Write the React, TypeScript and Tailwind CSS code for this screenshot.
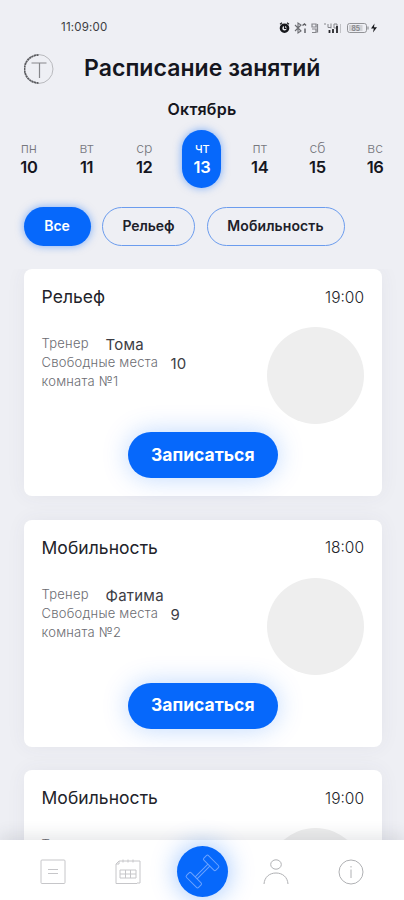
import clsx from "clsx"

interface Lesson {
  id: number
  title: string
  time: string
  trainer?: string
  places?: number
  room?: string
}

const days = [
  { name: "пн", date: 10 },
  { name: "вт", date: 11 },
  { name: "ср", date: 12 },
  { name: "чт", date: 13 },
  { name: "пт", date: 14 },
  { name: "сб", date: 15 },
  { name: "вс", date: 16 },
]

const lessons: Lesson[] = [
  { id: 1, title: "Рельеф", time: "19:00", trainer: "Тома", places: 10, room: "комната №1" },
  { id: 2, title: "Мобильность", time: "18:00", trainer: "Фатима", places: 9, room: "комната №2" },
  { id: 3, title: "Мобильность", time: "19:00" },
]

function StatusBar() {
  return (
    <div className="flex h-[56px] items-center justify-between pr-[26px] pl-[61px] text-[#3c3d42]">
      <span className="text-[11.5px] tracking-[0.2px]">11:09:00</span>
      <svg width="100" height="14" viewBox="0 0 100 14" fill="none">
        {/* alarm */}
        <circle cx="6.5" cy="7.2" r="3.5" stroke="#17181c" strokeWidth="2.6" />
        <path d="M2 3.2l2-1.4M11 3.2L9 1.8M6.5 5v2.4h2" stroke="#17181c" strokeWidth="1.1" />
        {/* bluetooth */}
        <path d="M17 4l6 6-3 2V2l3 2-6 6" stroke="#6b6c71" strokeWidth="1.1" />
        <path d="M24.5 4.5l2-1.5 1.5 1.5M27 7.500v4.500" stroke="#5b5c61" strokeWidth="1.400" />
        {/* nfc */}
        <path d="M34 3h4v3h-4zM34 8h4v3.500h-4M39.500 3v8.500" stroke="#85868b" strokeWidth="1.200" />
        {/* signal */}
        <path d="M46 3h2M50 3v3.500h3M53 2.500v5M56 3h3v4h-3z" stroke="#85868b" strokeWidth="1" />
        <path d="M51.500 9v3M55 8v4M59 5v7" stroke="#26272c" strokeWidth="1.800" />
        <path d="M62.500 3v9" stroke="#c0c1c5" strokeWidth="1" />
        {/* battery */}
        <rect x="69.500" y="2.500" width="19" height="9" rx="2.200" stroke="#929397" />
        <rect x="71" y="4" width="13.500" height="6" fill="#d0d1d5" />
        <text x="73.500" y="9.700" fontSize="7" fill="#6b6c71">85</text>
        <path d="M90 5.500v3" stroke="#929397" strokeWidth="1.200" />
        <path d="M96.500 2.500L93 7.500h2.800l-.8 4 4-5.300h-3z" fill="#17181c" />
      </svg>
    </div>
  )
}

function Logo() {
  return (
    <svg width="30" height="32" viewBox="0 0 30 32" fill="none">
      <path d="M14.5 1.5a14.3 14.3 0 0 1 0 29" stroke="#b9babe" strokeWidth="1" />
      <path d="M14.5 2A14 14 0 0 0 14.5 30" stroke="#5b5c60" strokeWidth="1.8" strokeDasharray="2.2 0.4" />
      <path d="M7.5 10h15M15.5 10v15" stroke="#85868a" strokeWidth="1.2" />
    </svg>
  )
}

function DayPicker() {
  return (
    <div className="grid h-[58px] grid-cols-7">
      {days.map(({ name, date }) => {
        const active = date === 13
        return (
          <div key={date} className="flex justify-center">
            <div
              className={clsx(
                "flex h-[58px] w-[39px] flex-col items-center rounded-full pt-[8px]",
                active ? "bg-[#0668fb] text-white shadow-[0_0_9px_rgba(6,104,251,0.5)]" : "text-[#15161e]",
              )}
            >
              <span className={clsx("text-[14px] leading-[19px]", active ? "text-white" : "font-light text-[#77787e]")}>{name}</span>
              <span className="text-[16.5px] leading-[21px] font-semibold tracking-[-0.3px]">{date}</span>
            </div>
          </div>
        )
      })}
    </div>
  )
}

function Filters() {
  return (
    <div className="flex h-[39px] gap-[11.5px] pl-[23.5px] text-[14px] font-semibold text-[#20212a]">
      <button className="w-[67px] rounded-full bg-[#0668fb] pb-[2px] text-white shadow-[0_0_9px_rgba(6,104,251,0.5)]">Все</button>
      <button className="w-[93px] rounded-full border border-[#6b9cee] pb-[2px] tracking-[-0.1px]">Рельеф</button>
      <button className="w-[138px] rounded-full border border-[#6b9cee] pb-[2px] tracking-[0.1px]">Мобильность</button>
    </div>
  )
}

function LessonCard({ lesson }: { lesson: Lesson }) {
  return (
    <article className="h-[227px] shrink-0 rounded-[8px] bg-white px-[18px] pt-[16px] shadow-[0_0_20px_rgba(60,70,100,0.06)]">
      <div className="flex h-[25px] items-center justify-between text-[#22232a]">
        <h2 className="text-[17.5px] tracking-[0.05px]">{lesson.title}</h2>
        <span className="text-[15.5px] font-light">{lesson.time}</span>
      </div>
      <div className="flex justify-between pt-[17px]">
        <div className="pt-[7px] text-[13px] leading-[19px] font-light tracking-[0.23px] text-[#6b6c72]">
          <div className="flex h-[19px]">
            <span className="w-[64px]">Тренер</span>
            <span className="text-[15px] leading-[21px] font-normal text-[#3c3d44]">{lesson.trainer}</span>
          </div>
          {lesson.places !== undefined && (
            <div className="flex h-[19px]">
              <span className="w-[129px]">Свободные места</span>
              <span className="text-[15px] leading-[21px] font-normal text-[#3c3d44]">{lesson.places}</span>
            </div>
          )}
          {lesson.room && <div>{lesson.room}</div>}
        </div>
        <div className="size-[97px] rounded-full bg-[#eeeeee]" />
      </div>
      {lesson.trainer && (
        <div className="flex justify-center pt-[8px]">
          <button className="h-[46px] w-[150px] rounded-full bg-[#0668fb] text-[17.5px] font-bold text-white shadow-[0_0_26px_rgba(6,104,251,0.26)]">
            Записаться
          </button>
        </div>
      )}
    </article>
  )
}

function BottomNav() {
  return (
    <nav className="relative flex h-[60px] shrink-0 items-center bg-white px-[16px] pt-[3px] shadow-[0_-5px_15px_rgba(50,55,75,0.12)]">
      <div className="flex flex-1 justify-center">
        <svg width="26" height="26" viewBox="0 0 26 26" fill="none" stroke="#c6c6c9">
          <rect x="1" y="1" width="24" height="23.5" rx="1" />
          <path d="M8 10.5h10M8 14.5h10" />
        </svg>
      </div>
      <div className="flex flex-1 justify-center">
        <svg width="26" height="26" viewBox="0 0 26 26" fill="none" stroke="#c6c6c9">
          <path d="M4 5V2h21v22h-3M1 5h3M1 5v19.5h21M4 2l-3 3M8 0.500v3M13 0.500v3M18 0.500v3" />
          <path d="M5 11h16M5 15h16M5 19h16M5 11v8M10.500 11v8M15.500 11v8M21 11v8" />
        </svg>
      </div>
      <div className="flex flex-1 justify-center">
        <div className="flex size-[51px] shrink-0 items-center justify-center rounded-full bg-[#0668fb] shadow-[0_0_26px_rgba(6,104,251,0.4)]">
          <svg width="37" height="37" viewBox="0 0 37 37" fill="none" stroke="#6ba3ff" strokeWidth="1">
            <g transform="rotate(-45 18.5 18.5)">
              <rect x="3" y="10" width="6.5" height="17" rx="1.5" />
              <rect x="27.5" y="10" width="6.5" height="17" rx="1.5" />
              <path d="M9.500 17.200h18M9.500 19.800h18" />
            </g>
          </svg>
        </div>
      </div>
      <div className="flex flex-1 justify-center">
        <svg width="26" height="26" viewBox="0 0 26 26" fill="none" stroke="#b0b1b4">
          <ellipse cx="13" cy="5.5" rx="5.3" ry="4.7" />
          <path d="M1 25c.5-7 5.5-11 12-11s11.5 4 12 11" />
        </svg>
      </div>
      <div className="flex flex-1 justify-center">
        <svg width="26" height="26" viewBox="0 0 26 26" fill="none" stroke="#b0b1b4">
          <circle cx="13" cy="13" r="12" />
          <path d="M13 10.5v8.5M13 7v1.5" />
        </svg>
      </div>
    </nav>
  )
}

export default function App() {
  return (
    <div className="flex h-[900px] w-[404px] flex-col overflow-hidden bg-[#eeeff4] font-['Inter','Noto_Sans',sans-serif] text-[#15161e]">
      <StatusBar />
      <header className="flex h-[25px] items-center pl-[24px]">
        <Logo />
        <h1 className="ml-[30px] text-[23px] font-semibold tracking-[0.05px] whitespace-nowrap">Расписание занятий</h1>
      </header>
      <div className="mt-[16px] mb-[9px] text-center text-[16px] leading-[24px] font-semibold tracking-[0.2px]">Октябрь</div>
      <DayPicker />
      <div className="pt-[19px] pb-[23px]">
        <Filters />
      </div>
      <main className="flex min-h-0 flex-1 flex-col gap-[23.5px] overflow-hidden pr-[22px] pl-[23.5px]">
        {lessons.map(lesson => (
          <LessonCard key={lesson.id} lesson={lesson} />
        ))}
      </main>
      <BottomNav />
    </div>
  )
}
